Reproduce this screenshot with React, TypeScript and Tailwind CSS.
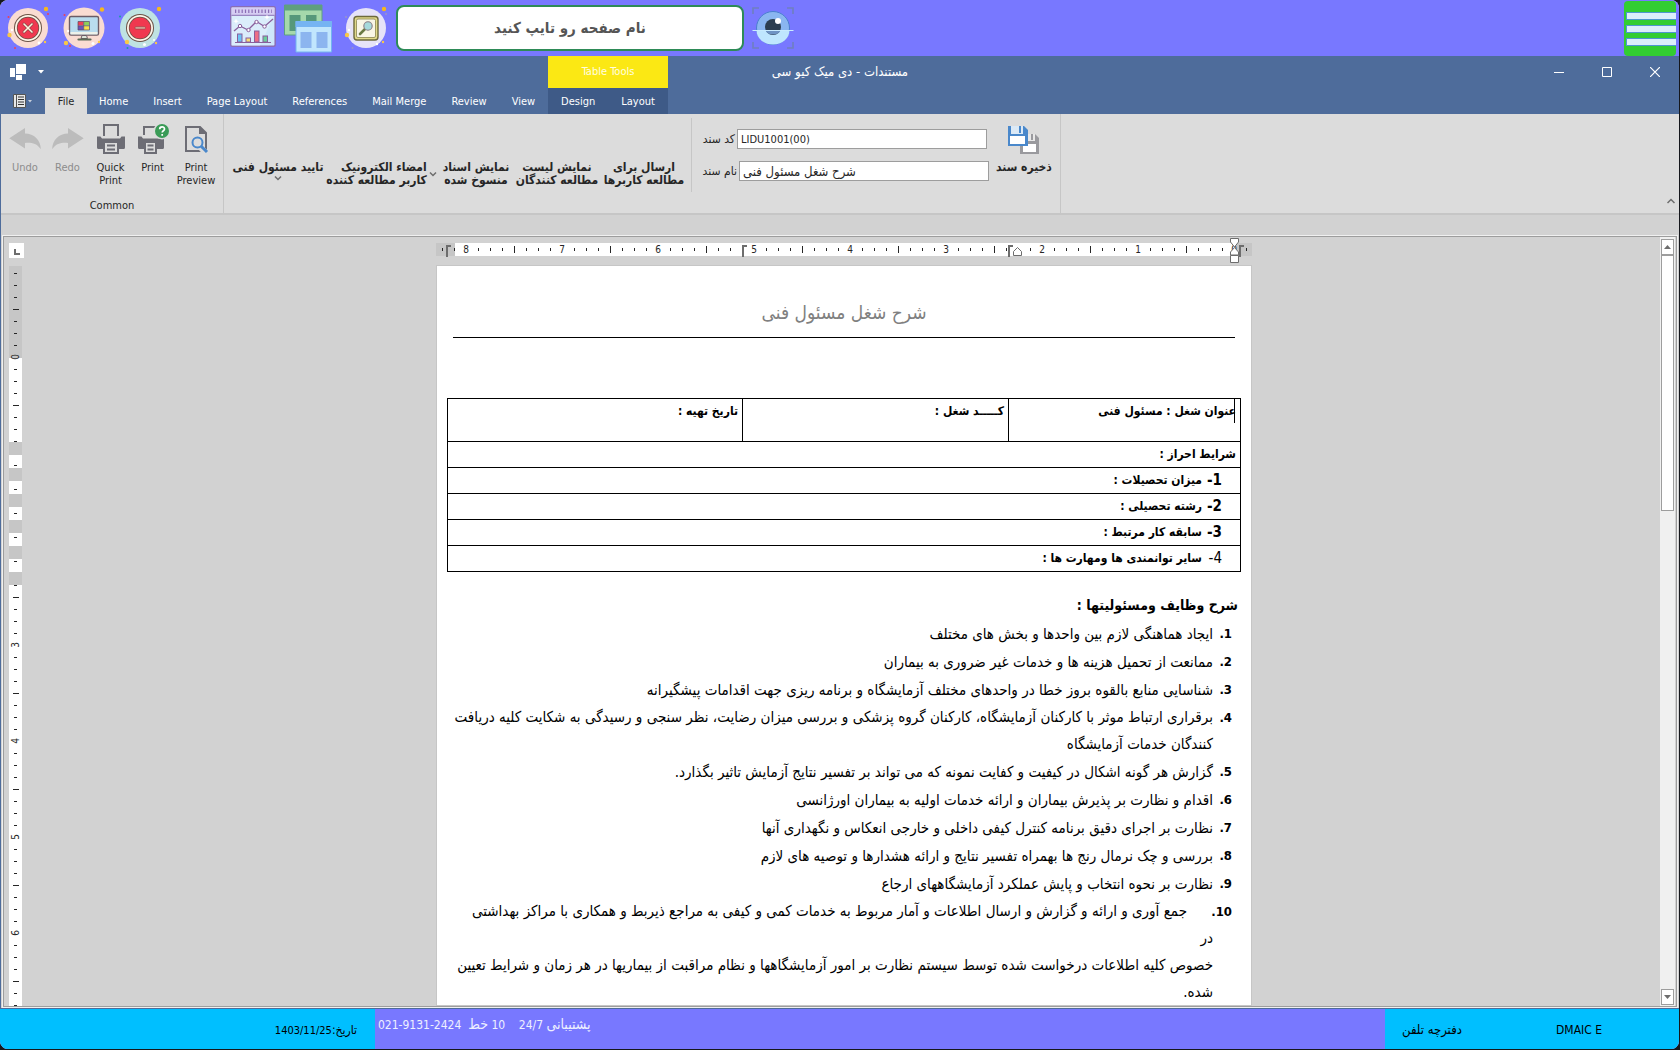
import React from "react";

const UI = "font-['DejaVu_Sans_Condensed','DejaVu_Sans',sans-serif]";

function CloseBadge() {
  return (
    <svg viewBox="0 0 44 44" className="h-11 w-11">
      <circle cx="21" cy="22" r="20" fill="#fadcd2" />
      <circle cx="21" cy="22" r="14" fill="#6b5346" />
      <circle cx="21" cy="22" r="13" fill="#fff6ea" />
      <circle cx="21" cy="22" r="11.2" fill="#6b5346" />
      <circle cx="21" cy="22" r="10.5" fill="#f0384f" />
      <path d="M17 18l8 8M25 18l-8 8" stroke="#8a4a4a" strokeWidth="3" strokeLinecap="round" />
      <path d="M17 18l8 8M25 18l-8 8" stroke="#fff3dd" strokeWidth="1.6" strokeLinecap="round" />
      <circle cx="39" cy="3" r="2.2" fill="#f6b81f" />
      <circle cx="2.5" cy="29" r="2.2" fill="#f9c846" />
      <circle cx="38" cy="36" r="1.2" fill="#f9c846" />
      <circle cx="1.5" cy="11" r="1" fill="#ef4056" />
      <circle cx="41" cy="8" r="1" fill="#ef4056" />
      <circle cx="8" cy="42" r="1" fill="#ef4056" />
      <circle cx="5" cy="24" r="1.2" fill="#fff" />
      <circle cx="32" cy="37" r="1.4" fill="#fff" />
    </svg>
  );
}

function DesktopBadge() {
  return (
    <svg viewBox="0 0 44 44" className="h-11 w-11">
      <circle cx="22" cy="22" r="20.5" fill="#fadcd2" />
      <rect x="7.5" y="10.5" width="29" height="18.5" rx="1.5" fill="#b9dcee" stroke="#6d5c66" strokeWidth="1.4" />
      <rect x="8.5" y="26" width="27" height="2.5" fill="#eef2ea" />
      <path d="M16 15.5h5.5v4H16z" fill="#ef4056" />
      <path d="M22 15.5h5v4h-5z" fill="#8ccf5a" />
      <path d="M16 20h5.5v4H16z" fill="#6a54b8" />
      <path d="M22 20h5v4h-5z" fill="#f8e04c" />
      <path d="M16 15.5h11.5V24H16zM21.7 15.5V24M16 19.8h11.5" fill="none" stroke="#5a4a60" strokeWidth=".7" />
      <path d="M20 29.5h4.5l1 3h-6.5z" fill="#dfe6da" stroke="#6d5c66" strokeWidth="1" />
      <path d="M16.5 33.5h12" stroke="#5c6b56" strokeWidth="2.2" strokeLinecap="round" />
      <circle cx="40" cy="3.5" r="2.2" fill="#f6b81f" />
      <circle cx="4" cy="37" r="2.2" fill="#f9c846" />
      <circle cx="2.5" cy="9" r="1" fill="#ef4056" />
      <circle cx="8" cy="40" r="1" fill="#ef4056" />
      <circle cx="37" cy="36" r="1.2" fill="#f9c846" />
      <circle cx="31" cy="37.5" r="1.5" fill="#fff" />
      <circle cx="6" cy="25" r="1.2" fill="#fff" />
    </svg>
  );
}

function MinusBadge() {
  return (
    <svg viewBox="0 0 44 44" className="h-11 w-11">
      <circle cx="22" cy="22" r="20" fill="#bfe3e2" />
      <circle cx="22" cy="22" r="14" fill="#6b5346" />
      <circle cx="22" cy="22" r="13" fill="#fff6ea" />
      <circle cx="22" cy="22" r="11.2" fill="#6b5346" />
      <circle cx="22" cy="22" r="10.5" fill="#f0384f" />
      <rect x="17" y="20.7" width="10.5" height="2.4" rx="1" fill="#d9a79a" stroke="#8a4a4a" strokeWidth=".6" />
      <circle cx="41" cy="3" r="2.2" fill="#f6b81f" />
      <circle cx="9" cy="36" r="2.2" fill="#f9c846" />
      <circle cx="2" cy="10.5" r="1" fill="#19a0a0" />
      <circle cx="9.5" cy="42" r="1" fill="#19a0a0" />
      <circle cx="38" cy="37" r="1.2" fill="#f9c846" />
      <circle cx="26.5" cy="38.5" r="1.5" fill="#fff" />
      <circle cx="36" cy="34" r="1" fill="#fff" />
    </svg>
  );
}

function ChartIcon() {
  return (
    <svg viewBox="0 0 46 41" className="h-[41px] w-[46px]">
      <rect x=".8" y=".8" width="44.4" height="39.4" rx="1.5" fill="#cfe7fa" stroke="#8a6db4" strokeWidth="1.5" />
      <path d="M1.5 9h43L30 39.5H1.5z" fill="#e2f1fc" opacity=".6" />
      <rect x="1.5" y="1.5" width="43" height="7.5" fill="#d6cdf3" />
      <path d="M5 5.3h37" stroke="#8a6db4" strokeWidth="3.6" strokeDasharray="1.2 2.1" />
      <path d="M1.5 9.3h43" stroke="#8a6db4" strokeWidth="1" />
      <path d="M4 25l6-5 8 4 8.5-8.5 8 5L43 13" fill="none" stroke="#8a5f9c" strokeWidth="1.3" />
      <circle cx="10" cy="20" r="1.7" fill="#fff" stroke="#8a5f9c" />
      <circle cx="18.5" cy="24" r="1.7" fill="#fff" stroke="#8a5f9c" />
      <circle cx="26.5" cy="16" r="1.7" fill="#fff" stroke="#8a5f9c" />
      <circle cx="34.5" cy="20.5" r="1.7" fill="#fff" stroke="#8a5f9c" />
      <g stroke="#8a5f9c" strokeWidth="1">
        <rect x="7.5" y="28" width="4.5" height="8" fill="#6cc4f4" />
        <rect x="16" y="32" width="4.5" height="4" fill="#f8de72" />
        <rect x="24.5" y="25" width="4.5" height="11" fill="#ee6e85" />
        <rect x="33" y="30" width="4.5" height="6" fill="#6bcf9c" />
        <path d="M5 36.5h36" />
      </g>
      <path d="M6 12.5l.8 2 2 .8-2 .8-.8 2-.8-2-2-.8 2-.8zM37 8.5l.8 2 2 .8-2 .8-.8 2-.8-2-2-.8 2-.8z" fill="#fff" />
    </svg>
  );
}

function WindowsIcon() {
  return (
    <svg viewBox="0 0 48 49" className="h-[49px] w-12">
      <path d="M.5 1H38v30H.5z" fill="#a5d8ab" stroke="#5c9f83" />
      <path d="M.5 1H38v5.5H.5z" fill="#5f9f80" />
      <path d="M5.5 11h11v16h-11zM22 11h10.5v16H22z" fill="#56987a" />
      <path d="M12 17.5h35.5V48H12z" fill="#c1e6fd" stroke="#74b3f0" />
      <path d="M11.5 17h36v6h-36z" fill="#76b4f2" />
      <path d="M16.5 28h11v16h-11zM32.5 28h11v16h-11z" fill="#8cb5ef" />
    </svg>
  );
}

function SearchBadge() {
  return (
    <svg viewBox="0 0 44 44" className="h-11 w-11">
      <circle cx="22" cy="22" r="20" fill="#e6e3f8" />
      <rect x="10" y="10.5" width="24" height="23.5" rx="3" fill="#e0d98a" stroke="#6d6a3c" strokeWidth="1.4" />
      <rect x="12.5" y="13" width="19" height="18.5" rx="1.5" fill="#f9f6e6" stroke="#8b8750" strokeWidth=".8" />
      <path d="M16 28l5-5" stroke="#6b7a45" strokeWidth="2.6" strokeLinecap="round" />
      <circle cx="24" cy="20" r="4.2" fill="#a6d9dc" stroke="#8a7d86" strokeWidth="1.1" />
      <circle cx="40" cy="3" r="2.2" fill="#f6b81f" />
      <circle cx="3" cy="29" r="2.2" fill="#f9c846" />
      <circle cx="39" cy="36" r="1.2" fill="#f9c846" />
      <circle cx="42" cy="8" r="1" fill="#9a94c8" />
      <circle cx="2" cy="11" r="1" fill="#9a94c8" />
      <circle cx="8.5" cy="42" r="1" fill="#9a94c8" />
      <circle cx="33" cy="38" r="1.2" fill="#fff" />
      <circle cx="5" cy="24" r="1.2" fill="#fff" />
    </svg>
  );
}

function EyeIcon() {
  return (
    <svg viewBox="0 0 42 42" className="h-[42px] w-[42px]">
      <path d="M1 7V1h6M35 1h6v6M41 35v6h-6M7 41H1v-6" fill="none" stroke="#6f7fc0" strokeWidth="1.6" />
      <circle cx="21" cy="21" r="16.5" fill="#8ab6f0" stroke="#4b7fd0" />
      <path d="M4.500 23.500h33a16.500 14 0 0 1-33 0z" fill="#bfe6fe" />
      <circle cx="21" cy="20" r="8" fill="#2c3e50" />
      <path d="M13.500 23.500h15a8 6 0 0 1-15 0z" fill="#6e93c4" />
      <circle cx="26" cy="14" r="3" fill="#fff" />
      <path d="M.5 23.500h41" stroke="#c9ebff" strokeWidth="1.2" />
    </svg>
  );
}

function Undo({ flip = false }: { flip?: boolean }) {
  return (
    <svg viewBox="0 0 34 32" className={flip ? "h-8 w-[34px] -scale-x-100" : "h-8 w-[34px]"}>
      <path d="M1.3 15.3L17 5v5.5c9 0 15.8 6.500 15.8 15.8C28.5 20 23 19.500 17 20v5.500z" fill="#bcbcbc" />
    </svg>
  );
}

function PrinterIcon({ help = false }: { help?: boolean }) {
  return (
    <svg viewBox="0 0 34 32" className="h-8 w-[34px]">
      {help ? (
        <g transform="translate(0 2)">
          <path d="M8 10V2h14v8" fill="none" stroke="#6d6d75" strokeWidth="2" />
          <path d="M2 11.500h3.500l1.500 2h16l1.500-2H28v11a1.500 1.500 0 0 1-1.500 1.500h-23A1.500 1.500 0 0 1 2 22.500z" fill="#6d6d75" />
          <path d="M9 17h11v11H9z" fill="#dcdcdc" stroke="#6d6d75" strokeWidth="2" />
          <path d="M11.500 20.500h6M11.500 24.500h6" stroke="#6d6d75" strokeWidth="2" />
          <circle cx="26" cy="6" r="8.5" fill="#dcdcdc" />
        </g>
      ) : (
        <g>
          <path d="M10 13V2h14v11" fill="none" stroke="#6d6d75" strokeWidth="2" />
          <path d="M3 13.500h3.500l1.500 2h18l1.500-2H31v11a1.500 1.500 0 0 1-1.500 1.500h-25A1.500 1.500 0 0 1 3 24.500z" fill="#6d6d75" />
          <path d="M10 19h14v11H10z" fill="#dcdcdc" stroke="#6d6d75" strokeWidth="2" />
          <path d="M13 22.500h8M13 26.500h8" stroke="#6d6d75" strokeWidth="2" />
        </g>
      )}
      {help && (
        <g>
          <circle cx="26" cy="8" r="7" fill="#3a9b57" />
          <path d="M23.700 6.300c0-3.200 4.800-3.200 4.800-.2 0 1.700-2.300 1.700-2.300 3.500M26.200 11v1.700" fill="none" stroke="#fff" strokeWidth="1.7" />
        </g>
      )}
    </svg>
  );
}

function PreviewIcon() {
  return (
    <svg viewBox="0 0 34 32" className="h-8 w-[34px]">
      <path d="M7 4h14l6 6v18H7z" fill="#dcdcdc" stroke="#6d6d75" strokeWidth="2" />
      <path d="M20 3l8 8h-8z" fill="#6d6d75" />
      <path d="M22 25l8 8" stroke="#dcdcdc" strokeWidth="6" />
      <circle cx="18.5" cy="19.5" r="5" fill="#dcdcdc" stroke="#4a88cb" strokeWidth="2" />
      <path d="M22.200 23.200l5.800 5.800" stroke="#4a88cb" strokeWidth="3" />
    </svg>
  );
}

function SaveAllIcon() {
  return (
    <svg viewBox="0 0 34 32" className="h-8 w-[34px]">
      <path d="M13 11h15l4 4v16H13z" fill="#9a9a9e" />
      <rect x="19" y="11" width="9" height="7" fill="#e8e8e8" />
      <rect x="24" y="11" width="2" height="6" fill="#9a9a9e" />
      <rect x="16" y="21" width="13" height="8" fill="#fff" />
      <path d="M1 3h16l4 4v16H1z" fill="#4a88cb" />
      <rect x="4" y="3" width="12" height="8" fill="#dbe9f6" />
      <rect x="12" y="3" width="2" height="7" fill="#4a88cb" />
      <rect x="3" y="13" width="15" height="8" fill="#fff" />
    </svg>
  );
}

function Chevron({ up = false }: { up?: boolean }) {
  return (
    <svg viewBox="0 0 8 8" className="inline h-2 w-2">
      <path d={up ? "M.5 6L4 2.500 7.500 6" : "M1 2.500L4 5.500 7 2.500"} fill="none" stroke="#6d6d6d" strokeWidth="1.5" />
    </svg>
  );
}

const menuTabs = ["Home", "Insert", "Page Layout", "References", "Mail Merge", "Review", "View"];

function TitleBar() {
  return (
    <div className="flex h-8 items-center bg-[#4e6c9b] text-[11px] text-white">
      <div className="flex w-36 items-center">
        <svg viewBox="0 0 16 16" className="ml-[9px] h-4 w-4" fill="#fff">
          <path d="M0 4h5v9H0zM6 0h10v10H6zM6 11h6v5H6z" />
        </svg>
        <button aria-label="Customize quick access" className="ml-3 flex w-[6px] justify-center">
          <svg viewBox="0 0 6 4" className="h-1 w-1.5"><path d="M0 0h6L3 3.500z" fill="#fff" /></svg>
        </button>
      </div>
      <h1 dir="rtl" className="flex-1 text-center text-[13px]">مستندات - دی میک کیو سی</h1>
      <div className="flex">
        <button aria-label="Minimize" className="flex h-8 w-12 items-center justify-center">
          <svg viewBox="0 0 10 10" className="h-2.5 w-2.5"><path d="M0 5.500h10" stroke="#fff" /></svg>
        </button>
        <button aria-label="Maximize" className="flex h-8 w-12 items-center justify-center">
          <svg viewBox="0 0 10 10" className="h-2.5 w-2.5"><path d="M.5.5h9v9h-9z" fill="none" stroke="#fff" /></svg>
        </button>
        <button aria-label="Close" className="flex h-8 w-12 items-center justify-center">
          <svg viewBox="0 0 10 10" className="h-2.5 w-2.5"><path d="M0 0l10 10M10 0L0 10" stroke="#fff" strokeWidth="1.2" /></svg>
        </button>
      </div>
    </div>
  );
}

function TabRow() {
  return (
    <nav className="flex h-[26px] bg-[#4e6c9b] text-[11px] leading-[28px] text-white">
      <button aria-label="Application menu" className="flex w-11 items-center gap-0.5 pl-3">
        <svg viewBox="0 0 13 14" className="h-3.5 w-[13px]">
          <path d="M.5.5h12v13H.5z" fill="#e8e8e8" stroke="#555" />
          <path d="M3.500 0v14" stroke="#555" />
          <path d="M5 3h6M5 5.500h6M5 8h6M5 10.500h6" stroke="#333" />
        </svg>
        <svg viewBox="0 0 4 3" className="h-[3px] w-1"><path d="M0 0h4L2 2.500z" fill="#c8d0dc" /></svg>
      </button>
      <button className="w-[42px] bg-[#dcdcdc] text-[#262626]">File</button>
      {menuTabs.map((t) => (
        <button key={t} className="pl-3 pr-[13px]">{t}</button>
      ))}
      <div className="relative flex bg-[#3e5a87]">
        <span className="absolute inset-x-0 bottom-full h-8 bg-[#fbe814] text-center leading-8 text-[#fffde0]">Table Tools</span>
        <button className="px-[13px]">Design</button>
        <button className="px-[13px]">Layout</button>
      </div>
    </nav>
  );
}

function BigButton({ icon, lines, muted = false, className }: { icon: React.ReactNode; lines: string[]; muted?: boolean; className: string }) {
  return (
    <button className={className}>
      <span className="flex justify-center">{icon}</span>
      <span className={muted ? "mt-1.5 block leading-[13px] text-[#8c8c8c]" : "mt-1.5 block leading-[13px]"}>
        {lines.map((l) => (
          <span key={l} className="block">{l}</span>
        ))}
      </span>
    </button>
  );
}

function PersianButton({ lines, menu = false, className }: { lines: string[]; menu?: boolean; className: string }) {
  return (
    <button dir="rtl" className={className}>
      {lines.map((l) => (
        <span key={l} className="block whitespace-nowrap">{l}</span>
      ))}
      {menu && <span className="flex justify-center"><Chevron /></span>}
    </button>
  );
}

function Ribbon() {
  return (
    <div className="flex h-[101px] border-b-2 border-[#c6c6c6] bg-[#dcdcdc] text-[11px] text-[#262626]">
      <section className="flex w-[223px] flex-col border-r border-[#c6c6c6]">
        <div className="flex flex-1 items-start pl-[3px] pt-[9px]">
          <BigButton icon={<Undo />} lines={["Undo"]} muted className="w-[42px]" />
          <BigButton icon={<Undo flip />} lines={["Redo"]} muted className="w-[43px]" />
          <BigButton icon={<PrinterIcon />} lines={["Quick", "Print"]} className="w-[43px]" />
          <BigButton icon={<PrinterIcon help />} lines={["Print"]} className="w-[41px]" />
          <BigButton icon={<PreviewIcon />} lines={["Print", "Preview"]} className="w-[46px]" />
        </div>
        <h2 className="text-center leading-[15px]">Common</h2>
      </section>
      <section className="flex w-[837px] items-start border-r border-[#c6c6c6]">
        <div className="flex items-start pl-[7px] pt-[47px] text-[12px] font-bold leading-[13px]">
          <PersianButton lines={["تایید مسئول فنی"]} menu className="w-[94px]" />
          <button dir="rtl" className="flex w-[113px] items-center justify-center gap-0.5">
            <Chevron />
            <span className="text-start">
              <span className="block whitespace-nowrap">امضاء الکترونیک</span>
              <span className="block whitespace-nowrap">کاربر مطالعه کننده</span>
            </span>
          </button>
          <PersianButton lines={["نمایش اسناد", "منسوخ شده"]} className="w-[76px]" />
          <PersianButton lines={["نمایش لیست", "مطالعه کنندگان"]} className="w-[86px]" />
          <PersianButton lines={["ارسال برای", "مطالعه کاربرها"]} className="w-[88px]" />
        </div>
        <div className="ml-[3px] mt-1 h-[74px] border-l border-[#c6c6c6]" />
        <div className="flex w-[297px] flex-col gap-3 pl-2 pt-[15px]">
          <div className="flex items-center gap-0.5">
            <label htmlFor="doc-code" dir="rtl" className="w-[35px] whitespace-nowrap text-[12px]">کد سند</label>
            <input id="doc-code" defaultValue="LIDU1001(00)" className="h-5 w-[250px] border border-[#9d9d9d] bg-white px-[3px]" />
          </div>
          <div className="flex items-center gap-0.5">
            <label htmlFor="doc-name" dir="rtl" className="w-[37px] whitespace-nowrap text-[12px]">نام سند</label>
            <input id="doc-name" defaultValue="شرح شغل مسئول فنی" className="h-5 w-[250px] border border-[#9d9d9d] bg-white px-[3px] text-[13px]" />
          </div>
        </div>
        <button dir="rtl" className="ml-[5px] w-[60px] pt-[9px] text-[12px] font-bold leading-[13px]">
          <span className="flex justify-center"><SaveAllIcon /></span>
          <span className="mt-1.5 block whitespace-nowrap">ذخیره سند</span>
        </button>
      </section>
      <button aria-label="Collapse ribbon" className="ml-auto mr-1 self-end pb-1"><Chevron up /></button>
    </div>
  );
}

const hTicks = Array.from({ length: 68 }, (_, i) => i);
const vTicks = Array.from({ length: 62 }, (_, i) => i);

function TabStop({ className }: { className: string }) {
  return (
    <svg viewBox="0 0 5 12" className={className}>
      <path d="M1 12V1h4" fill="none" stroke="#6d6d6d" strokeWidth="2" />
    </svg>
  );
}

function HRuler() {
  return (
    <div className="relative h-[13px] w-[816px] bg-[#c6c6c6]">
      <div className="absolute inset-y-0 left-[19px] right-[16px] bg-white" />
      <div className="relative flex text-[10px] leading-[13px] text-[#262626]">
        {hTicks.map((i) => {
          const k = (i + 6) % 8;
          return (
            <span key={i} className="flex h-[13px] w-3 items-center justify-center">
              {k === 0 ? (66 - i) / 8 : k === 4 ? <i className="h-[7px] w-px bg-[#262626]" /> : <i className="h-[3px] w-px bg-[#262626]" />}
            </span>
          );
        })}
      </div>
      <TabStop className="absolute left-[10px] top-0.5 h-3 w-[5px]" />
      <TabStop className="absolute left-[306px] top-0.5 h-3 w-[5px]" />
      <TabStop className="absolute left-[572px] top-0.5 h-3 w-[5px]" />
      <TabStop className="absolute left-[803px] top-0.5 h-3 w-[5px]" />
      <svg viewBox="0 0 9 9" className="absolute left-[577px] top-[4px] h-[9px] w-[9px]">
        <path d="M.5 8.500V4.500l4-4 4 4v4z" fill="#fff" stroke="#6d6d6d" />
      </svg>
      <svg viewBox="0 0 9 25" className="absolute -top-[5px] left-[794px] h-[25px] w-[9px]">
        <path d="M.5.5h8v3.500L4.500 9l-4-5zM.5 17v-3l4-4.500 4 4.500v3zM.5 17.500h8v7h-8z" fill="#fff" stroke="#6d6d6d" />
      </svg>
    </div>
  );
}

function VRuler() {
  return (
    <div className="relative min-h-0 w-[13px] flex-1 overflow-hidden bg-white pt-px">
      <div className="absolute inset-x-0 top-0 h-[92px] bg-[#c6c6c6]" />
      <div className="relative text-[10px] leading-3 text-[#262626]">
        {vTicks.map((i) => {
          const k = (i + 1) % 8;
          return (
            <span key={i} className="flex h-3 items-center justify-center">
              {k === 0 ? (
                <b className="-rotate-90 font-normal">{(i + 1) / 8 - 1}</b>
              ) : k === 4 ? (
                <i className="h-px w-1.5 bg-[#262626]" />
              ) : (
                <i className="h-px w-[3px] bg-[#262626]" />
              )}
            </span>
          );
        })}
      </div>
      <div className="absolute inset-x-0 top-[176px] flex flex-col gap-[13px]">
        <i className="h-[13px] bg-[#c6c6c6]" />
        <i className="h-[13px] bg-[#c6c6c6]" />
        <i className="h-[13px] bg-[#c6c6c6]" />
        <i className="h-[13px] bg-[#c6c6c6]" />
        <i className="h-[13px] bg-[#c6c6c6]" />
        <i className="h-[13px] bg-[#c6c6c6]" />
      </div>
    </div>
  );
}

const requirements = [
  ["1", "میزان تحصیلات :"],
  ["2", "رشته تحصیلی :"],
  ["3", "سابقه کار مرتبط :"],
  ["4", "سایر توانمندی ها ومهارت ها :"],
];

const duties: string[][] = [
  ["ایجاد هماهنگی لازم بین واحدها و بخش های مختلف"],
  ["ممانعت از تحمیل هزینه ها و خدمات غیر ضروری به بیماران"],
  ["شناسایی منابع بالقوه بروز خطا در واحدهای مختلف آزمایشگاه و برنامه ریزی جهت اقدامات پیشگیرانه"],
  ["برقراری ارتباط موثر با کارکنان آزمایشگاه، کارکنان گروه پزشکی و بررسی میزان رضایت، نظر سنجی و رسیدگی به شکایت کلیه دریافت", "کنندگان خدمات آزمایشگاه"],
  ["گزارش هر گونه اشکال در کیفیت و کفایت نمونه که می تواند بر تفسیر نتایج آزمایش تاثیر بگذارد."],
  ["اقدام و نظارت بر پذیرش بیماران و ارائه خدمات اولیه به بیماران اورژانسی"],
  ["نظارت بر اجرای دقیق برنامه کنترل کیفی داخلی و خارجی انعکاس و نگهداری آنها"],
  ["بررسی و چک نرمال رنج ها بهمراه تفسیر نتایج و ارائه هشدارها و توصیه های لازم"],
  ["نظارت بر نحوه انتخاب و پایش عملکرد آزمایشگاههای ارجاع"],
  ["جمع آوری و ارائه و گزارش و ارسال اطلاعات و آمار مربوط به خدمات کمی و کیفی به مراجع ذیربط و همکاری با مراکز بهداشتی", "در", "خصوص کلیه اطلاعات درخواست شده توسط سیستم نظارت بر امور آزمایشگاهها و نظام مراقبت از بیماریها در هر زمان و شرایط تعیین", "شده."],
];

function Page() {
  return (
    <article dir="rtl" className="w-[816px] flex-1 border border-[#c6c6c6] bg-white text-black">
      <h2 className="mx-4 mt-[30px] h-[42px] border-b border-black text-center text-[19px] leading-[32px] text-[#808080]">شرح شغل مسئول فنی</h2>
      <table className="mr-[10px] mt-[60px] w-[794px] table-fixed border-collapse text-[12px] font-bold leading-6 [&_td]:border [&_td]:border-black [&_td]:px-1 [&_td]:align-top">
        <colgroup>
          <col className="w-[232px]" />
          <col className="w-[266px]" />
          <col />
        </colgroup>
        <tbody>
          <tr className="h-[43px]">
            <td className="relative whitespace-nowrap">
              عنوان شغل : مسئول فنی
              <i className="absolute right-[5px] top-0 h-6 w-px bg-black" />
            </td>
            <td className="whitespace-nowrap">کـــــد شغل :</td>
            <td>تاریخ تهیه :</td>
          </tr>
          <tr className="h-[26px]"><td colSpan={3}>شرایط احراز :</td></tr>
          {requirements.map(([n, text]) => (
            <tr key={n} className="h-[26px]">
              <td colSpan={3}>
                <span className="flex pr-[14px]">
                  <span className={n === "4" ? "w-5 text-[15px] font-normal" : "w-5 text-[15px]"}>{n}-</span>
                  {text}
                </span>
              </td>
            </tr>
          ))}
        </tbody>
      </table>
      <h3 className="mr-[13px] mt-[19px] text-[14px] font-bold leading-7">شرح وظایف ومسئولیتها :</h3>
      <ol className="mr-[19px] mt-px text-[15px]">
        {duties.map((lines, i) => (
          <li key={i} className={lines.length > 1 ? "flex leading-[27px]" : "flex leading-7"}>
            <span className="w-[19px] shrink-0 whitespace-nowrap text-[13px] font-bold">{i + 1}.</span>
            <span>
              {lines.map((l, j) => (
                <span key={l} className={i === 9 && j === 0 ? "block whitespace-nowrap pr-[26px]" : "block whitespace-nowrap"}>{l}</span>
              ))}
            </span>
          </li>
        ))}
      </ol>
    </article>
  );
}

function Scrollbar() {
  return (
    <div className="mr-px flex w-[15px] flex-col border-x border-[#f0f0f0] bg-[#f0f0f0] pt-0.5">
      <button aria-label="Scroll up" className="flex h-4 items-center justify-center border border-[#9d9d9d] bg-white">
        <svg viewBox="0 0 7 4" className="h-1 w-[7px]"><path d="M0 4h7L3.500 0z" fill="#6d6d6d" /></svg>
      </button>
      <div className="h-[256px] border border-[#9d9d9d] bg-white" />
      <button aria-label="Scroll down" className="mb-px mt-auto flex h-4 items-center justify-center border border-[#9d9d9d] bg-white">
        <svg viewBox="0 0 7 4" className="h-1 w-[7px]"><path d="M0 0h7L3.500 4z" fill="#6d6d6d" /></svg>
      </button>
    </div>
  );
}

export default function App() {
  return (
    <div className={`${UI} h-screen bg-[#15171c] pb-px pr-px`}>
      <div className="flex h-full flex-col overflow-hidden rounded-lg bg-[#d2d2d2]">
        <header className="flex h-14 shrink-0 items-center bg-[#7878ff]">
          <button aria-label="Close" className="ml-[7px]"><CloseBadge /></button>
          <button aria-label="Desktop" className="ml-[11px]"><DesktopBadge /></button>
          <button aria-label="Minimize" className="ml-3"><MinusBadge /></button>
          <button aria-label="Charts" className="mb-1 ml-[68px]"><ChartIcon /></button>
          <button aria-label="Windows" className="ml-2"><WindowsIcon /></button>
          <button aria-label="Search" className="ml-3"><SearchBadge /></button>
          <input
            dir="rtl"
            aria-label="نام صفحه"
            placeholder="نام صفحه رو تایپ کنید"
            className="ml-2 h-[46px] w-[348px] rounded-lg border-2 border-[#2e8b57] bg-white text-center text-[15px] font-bold placeholder:text-[#555]"
          />
          <button aria-label="View" className="ml-2"><EyeIcon /></button>
          <button aria-label="Menu" className="ml-auto mr-[3px] mt-px flex h-[55px] w-[52px] flex-col justify-center gap-[5px] rounded bg-[#32cd32] pl-0.5">
            <i className="h-2 w-full border border-r-0 border-[#4f96cf] bg-[#dceefb]" />
            <i className="h-2 w-full border border-r-0 border-[#4f96cf] bg-[#dceefb]" />
            <i className="h-2 w-full border border-r-0 border-[#4f96cf] bg-[#dceefb]" />
          </button>
        </header>
        <div className="flex min-h-0 flex-1 flex-col border-b border-l border-[#4e6c9b]">
          <TitleBar />
          <TabRow />
          <Ribbon />
          <div className="h-5 shrink-0" />
          <main className="mx-px flex min-h-0 flex-1 border border-[#f0f0f0]">
            <div className="flex min-w-0 flex-1 border border-[#9d9d9d]">
              <div className="ml-[5px] flex flex-col pt-1.5">
                <div className="mb-2 h-[15px] w-[15px] bg-white">
                  <svg viewBox="0 0 15 15" className="h-[15px] w-[15px]"><path d="M6 6v5h5" fill="none" stroke="#6d6d6d" strokeWidth="2" /></svg>
                </div>
                <VRuler />
              </div>
              <div className="flex min-w-0 flex-1 flex-col items-center overflow-hidden pl-1 pt-1.5">
                <HRuler />
                <div className="mt-[9px] flex min-h-0 flex-1 overflow-hidden"><Page /></div>
              </div>
              <Scrollbar />
            </div>
          </main>
        </div>
        <footer className="flex h-10 shrink-0 bg-[#7878ff] text-[12px] text-black">
          <div dir="rtl" className="w-[375px] bg-[#00bfff] pr-[18px] pt-3 text-[11px] leading-[18px]">
            <span className="text-[12px]">تاریخ:</span><bdi dir="ltr">1403/11/25</bdi>
          </div>
          <p className="flex-1 whitespace-pre pl-[3px] pt-1.5 leading-[18px] text-[#eef0ff]">
            <span dir="rtl" className="inline-block"><span className="text-[14px]">پشتیبانی</span> 24/7{"    "}10 <span className="text-[14px]">خط</span>{"  "}<bdi dir="ltr">021-9131-2424</bdi></span>
          </p>
          <div className="flex w-[294px] bg-[#00bfff] pl-[17px] pt-3 leading-[18px]">
            <a href="#phonebook" dir="rtl" className="w-[154px] text-left text-[13px]">دفترچه تلفن</a>
            <span>DMAIC E</span>
          </div>
        </footer>
      </div>
    </div>
  );
}
